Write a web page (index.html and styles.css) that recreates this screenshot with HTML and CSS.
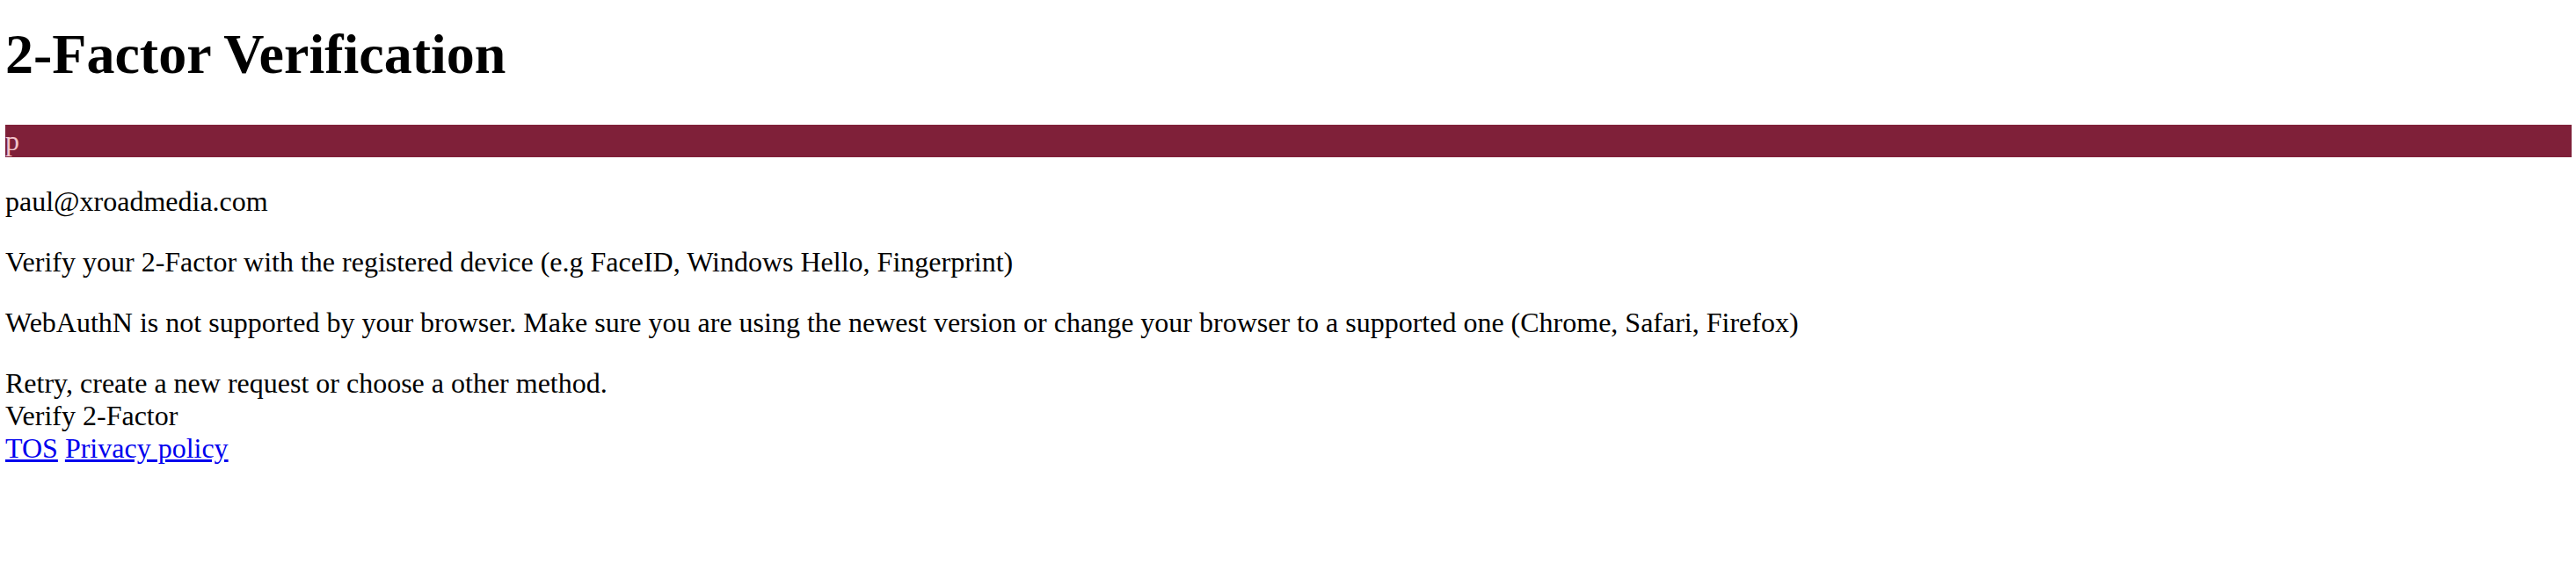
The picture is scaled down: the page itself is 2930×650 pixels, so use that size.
FILE: index.html
```html
<!DOCTYPE html>
<html lang="en">
<head>
<meta charset="utf-8">
<title>2-Factor Verification</title>
<link rel="stylesheet" href="styles.css">
</head>
<body>
<main class="page">
  <h1 class="title">2-Factor Verification</h1>
  <div class="banner">p</div>
  <p class="text">paul@xroadmedia.com</p>
  <p class="text">Verify your 2-Factor with the registered device (e.g FaceID, Windows Hello, Fingerprint)</p>
  <p class="text">WebAuthN is not supported by your browser. Make sure you are using the newest version or change your browser to a supported one (Chrome, Safari, Firefox)</p>
  <p class="text text-last">Retry, create a new request or choose a other method.</p>
  <div class="action">Verify 2-Factor</div>
  <div class="links"><a href="#" class="link">TOS</a> <a href="#" class="link">Privacy policy</a></div>
</main>
</body>
</html>
```

FILE: styles.css
```css
html, body {
  margin: 0;
  padding: 0;
  background: #ffffff;
}

body {
  font-family: "Liberation Serif", "Times New Roman", serif;
  font-size: 32px;
  color: #000000;
}

.page {
  padding: 0 5px 0 6px;
}

.title {
  font-size: 64px;
  font-weight: bold;
  margin: 0 0 43px 0;
  padding-top: 25px;
}

.banner {
  background: #7f2039;
  color: #f2c4cc;
  line-height: 37px;
}

.text {
  margin: 32px 0;
  line-height: 37px;
}

.text-last {
  margin-bottom: 0;
}

.action {
  line-height: 37px;
}

.links {
  line-height: 37px;
}

.link {
  color: #0000ee;
  text-decoration: underline;
}
```
